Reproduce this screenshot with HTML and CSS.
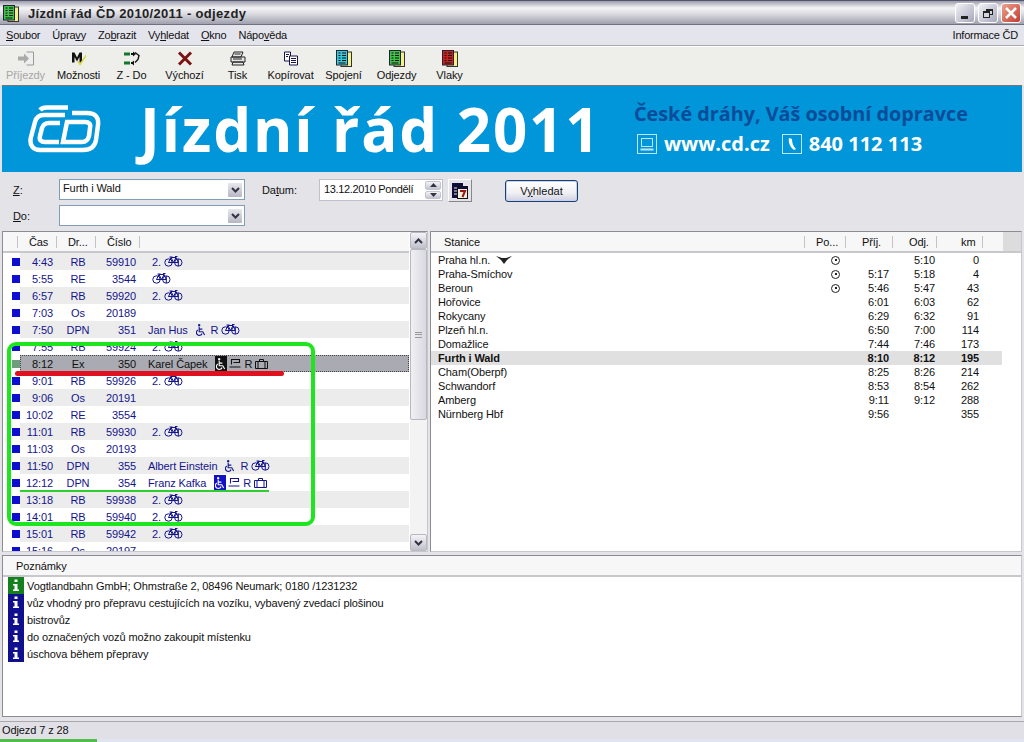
FILE: index.html
```html
<!DOCTYPE html>
<html>

<head>
    <meta charset="UTF-8">
    <title>Jízdní řád ČD 2010/2011 - odjezdy</title>
    <link rel="stylesheet" href="styles.css">
</head>

<body>
    <svg class="defs" width="0" height="0">
        <symbol id="bike" viewBox="0 0 19 11">
            <g fill="none" stroke="currentColor" stroke-width="1">
                <circle cx="4.500" cy="6.500" r="3.700" />
                <circle cx="14.300" cy="6.500" r="3.700" />
                <path d="M4.500 6.500 7 1.500h5l2.300 5h-10M7 1.500l2.500 5 2.500-5M5.500 1h3M11 .5h2.500M14.300 3v7" />
            </g>
        </symbol>
        <symbol id="chair" viewBox="0 0 11 13">
            <g fill="none" stroke="currentColor" stroke-width="1.200">
                <circle cx="3.500" cy="1.200" r=".7" />
                <path d="M3.500 3v5.500h4l2 3.500M3.500 5.500h3.500" />
                <path d="M2 6.500a3.200 3.200 0 1 0 4.700 3.800" />
            </g>
        </symbol>
        <symbol id="cup" viewBox="0 0 12 11">
            <path d="M2.500 6.500V1.500h8v3h-6M.5 9h11" fill="none" stroke="currentColor" stroke-width="1.100" />
        </symbol>
        <symbol id="case" viewBox="0 0 13 10">
            <path d="M.5 2.500h12v7H.5zM4.500 2.500v-2h4v2" fill="none" stroke="currentColor" />
            <path d="M3 3v6M10 3v6" stroke="currentColor" />
        </symbol>
        <symbol id="sheet" viewBox="0 0 16 17">
            <rect x="5" y="2" width="10.500" height="14.500" fill="#f4f08c" stroke="#333" />
            <rect x=".5" y=".5" width="11" height="14.500" fill="currentColor" stroke="#223" />
            <path d="M2.500 3h2M6 3h4M2.500 5.500h2M6 5.500h4M2.500 8h2M6 8h4M2.500 10.500h2M6 10.500h4M2.500 13h7" stroke="#111" />
        </symbol>
        <symbol id="info" viewBox="0 0 16 17">
            <rect width="16" height="17" fill="currentColor" />
            <path d="M6.500 2.500h3v2.500h-3zM5 7h4.500v5.500H11V14H5v-1.500h1.500V8.500H5z" fill="#fff" />
        </symbol>
    </svg>

    <div class="app">
        <header class="titlebar">
            <svg class="title-icon"><use href="#sheet" /></svg>
            <span class="title-text">Jízdní řád ČD 2010/2011 - odjezdy</span>
            <div class="win-buttons">
                <span class="win-btn"><i class="glyph-min"></i></span>
                <span class="win-btn"><i class="glyph-max back"></i><i class="glyph-max"></i></span>
                <span class="win-btn win-close">
                    <svg width="14" height="14" viewBox="0 0 14 14"><path d="M2 2l10 10M12 2 2 12" stroke="#fff" stroke-width="2.500" /></svg>
                </span>
            </div>
        </header>

        <nav class="menubar">
            <span><u>S</u>oubor</span>
            <span>Úpra<u>v</u>y</span>
            <span>Zo<u>b</u>razit</span>
            <span>Vy<u>h</u>ledat</span>
            <span><u>O</u>kno</span>
            <span>Nápo<u>v</u>ěda</span>
            <span class="menu-right">Informace ČD</span>
        </nav>

        <div class="toolbar">
            <div class="tool disabled">
                <svg width="18" height="16" viewBox="0 0 18 16"><path d="M9.500 1.500h7v13h-7" fill="#eee" stroke="#999" /><path d="M1 6h6V3l5 5-5 5v-3H1z" fill="#aaa" /></svg>
                <span>Příjezdy</span>
            </div>
            <div class="tool">
                <svg width="18" height="16" viewBox="0 0 18 16"><path d="M2 12V2h2.500L7 7l2.500-5H12v10H9.500V6.500L7 11 4.500 6.500V12z" fill="#111" /><path d="M8 11l2 3 6-9" fill="none" stroke="#d8d840" stroke-width="1.500" /></svg>
                <span>Možnosti</span>
            </div>
            <div class="tool">
                <svg width="18" height="16" viewBox="0 0 18 16"><path d="M1 2h6v3H1z" fill="#11772b" /><path d="M1 11h6v3H1z" fill="#11772b" /><path d="M8 3.500h2M8 12.500h2" stroke="#111" stroke-width="2" /><path d="M12 2l4 3-1 4-3 3" fill="none" stroke="#111" stroke-width="1.400" /><path d="M10 1v5l3-2.500zM11 10v5l-3-2.500z" fill="#111" /></svg>
                <span>Z - Do</span>
            </div>
            <div class="tool">
                <svg width="18" height="16" viewBox="0 0 18 16"><path d="M3 2l12 12M15 2 3 14" stroke="#7a1414" stroke-width="3" /></svg>
                <span>Výchozí</span>
            </div>
            <div class="tool">
                <svg width="18" height="16" viewBox="0 0 18 16"><path d="M5 1.500h9l-2 5H3zM2 6.500h14v5H2zM4 11.500h10l1 3H3z" fill="#e8e8e8" stroke="#222" /><path d="M4 8.500h9M5.500 3.500h6" stroke="#222" /></svg>
                <span>Tisk</span>
            </div>
            <div class="tool">
                <svg width="18" height="16" viewBox="0 0 18 16"><path d="M2.500 1.500h6v9h-6z" fill="#fff" stroke="#13134a" /><path d="M7.500 5.500h8v9h-8z" fill="#fff" stroke="#13134a" /><path d="M9 8h5M9 10h5M9 12h5M4 4h3M4 6h2" stroke="#13134a" /></svg>
                <span>Kopírovat</span>
            </div>
            <div class="tool">
                <svg width="16" height="17" color="#35c8d8"><use href="#sheet" /></svg>
                <span>Spojení</span>
            </div>
            <div class="tool">
                <svg width="16" height="17" color="#3ec04a"><use href="#sheet" /></svg>
                <span>Odjezdy</span>
            </div>
            <div class="tool">
                <svg width="16" height="17" color="#c92020"><use href="#sheet" /></svg>
                <span>Vlaky</span>
            </div>
        </div>

        <section class="banner">
            <svg class="cd-logo" width="74" height="50" viewBox="0 0 74 50">
                <g fill="none" stroke="#fff" stroke-width="4.500">
                    <path d="M13 6Q15 3.500 20 3.500H41" />
                    <path d="M38 11H17C11 11 9 14 8 18L4 33C2 41 6 46 13 46H56C64 46 68 42 69 36L71 21C72 13 68 9 60 9H45" />
                    <path d="M33 19H22C18 19 16 21 15 24L13 32C12 36 14 38 18 38H32" />
                    <path d="M40 18L36 38H55C59 38 61 36 62 32L63 24C64 20 62 18 58 18Z" />
                </g>
            </svg>
            <h1 class="banner-title">Jízdní řád 2011</h1>
            <div class="banner-info">
                <div class="slogan">České dráhy, Váš osobní dopravce</div>
                <div class="contacts">
                    <svg width="20" height="20" viewBox="0 0 20 20"><g fill="none" stroke="#bfe6f8"><rect x=".5" y=".5" width="19" height="19" /><rect x="4.500" y="4.500" width="11" height="8" /><path d="M3.500 15.500h13" stroke-width="2" /></g></svg>
                    <span class="web">www.cd.cz</span>
                    <svg width="20" height="20" viewBox="0 0 20 20"><rect x=".5" y=".5" width="19" height="19" fill="none" stroke="#bfe6f8" /><path d="M7 4c-1 4 1 9 5 12l2-1c-3-3-4-6-4-10z" fill="#fff" /></svg>
                    <span class="phone">840 112 113</span>
                </div>
            </div>
        </section>

        <form class="search">
            <div class="search-row">
                <label class="field-label"><u>Z</u>:</label>
                <div class="combo"><span>Furth i Wald</span><b class="combo-btn"><svg width="9" height="6" viewBox="0 0 9 6"><path d="M1 1l3.500 3.500L8 1" fill="none" stroke="#334" stroke-width="2" /></svg></b></div>
                <label class="date-label">Da<u>t</u>um:</label>
                <div class="date-box">
                    <span class="date-text">13.12.2010 Pondělí</span>
                    <div class="spin">
                        <b><svg width="7" height="4" viewBox="0 0 7 4"><path d="M0 4l3.500-4L7 4z" fill="#334" /></svg></b>
                        <b><svg width="7" height="4" viewBox="0 0 7 4"><path d="M0 0l3.500 4L7 0z" fill="#334" /></svg></b>
                    </div>
                </div>
                <div class="cal-btn"><svg width="16" height="16" viewBox="0 0 16 16"><path d="M0 0h11v3h-2v12H0z" fill="#0f0f3c" /><path d="M2 5h3M2 8h3M2 11h3" stroke="#e8e8e8" /><rect x="5.500" y="3.500" width="10" height="12" fill="#f0edda" stroke="#111" /><path d="M6 4h9v2H6z" fill="#0f0f3c" /><path d="M8 8h5l-2.500 6" fill="none" stroke="#a01414" stroke-width="2" /></svg></div>
                <button class="search-btn" type="button">V<u>y</u>hledat</button>
            </div>
            <div class="search-row">
                <label class="field-label"><u>D</u>o:</label>
                <div class="combo"><span></span><b class="combo-btn"><svg width="9" height="6" viewBox="0 0 9 6"><path d="M1 1l3.500 3.500L8 1" fill="none" stroke="#334" stroke-width="2" /></svg></b></div>
            </div>
        </form>

        <div class="panels">
            <div class="panel trains">
                <div class="list">
                    <div class="head trains-head">
                        <span class="h-mark"></span><span class="h-time">Čas</span><span class="h-kind">Dr...</span><span class="h-num">Číslo</span>
                    </div>
                    <div class="rows">
                        <div class="row alt"><i class="mark"></i><span class="time">4:43</span><span class="kind">RB</span><span class="num">59910</span><span class="extra">2. <svg class="i-bike"><use href="#bike" /></svg></span></div>
                        <div class="row"><i class="mark"></i><span class="time">5:55</span><span class="kind">RE</span><span class="num">3544</span><span class="extra"><svg class="i-bike"><use href="#bike" /></svg></span></div>
                        <div class="row alt"><i class="mark"></i><span class="time">6:57</span><span class="kind">RB</span><span class="num">59920</span><span class="extra">2. <svg class="i-bike"><use href="#bike" /></svg></span></div>
                        <div class="row"><i class="mark"></i><span class="time">7:03</span><span class="kind">Os</span><span class="num">20189</span><span class="extra"></span></div>
                        <div class="row alt"><i class="mark"></i><span class="time">7:50</span><span class="kind">DPN</span><span class="num">351</span><span class="extra"><em>Jan Hus</em><svg class="i-chair"><use href="#chair" /></svg> R <svg class="i-bike"><use href="#bike" /></svg></span></div>
                        <div class="row"><i class="mark"></i><span class="time">7:55</span><span class="kind">RB</span><span class="num">59924</span><span class="extra">2. <svg class="i-bike"><use href="#bike" /></svg></span></div>
                        <div class="row current"><i class="mark"></i><span class="time">8:12</span><span class="kind">Ex</span><span class="num">350</span><span class="extra"><em>Karel Čapek</em><span class="chair-box"><svg class="i-chair"><use href="#chair" /></svg></span><svg class="i-cup"><use href="#cup" /></svg> R <svg class="i-case"><use href="#case" /></svg></span></div>
                        <div class="row"><i class="mark"></i><span class="time">9:01</span><span class="kind">RB</span><span class="num">59926</span><span class="extra">2. <svg class="i-bike"><use href="#bike" /></svg></span></div>
                        <div class="row alt"><i class="mark"></i><span class="time">9:06</span><span class="kind">Os</span><span class="num">20191</span><span class="extra"></span></div>
                        <div class="row"><i class="mark"></i><span class="time">10:02</span><span class="kind">RE</span><span class="num">3554</span><span class="extra"></span></div>
                        <div class="row alt"><i class="mark"></i><span class="time">11:01</span><span class="kind">RB</span><span class="num">59930</span><span class="extra">2. <svg class="i-bike"><use href="#bike" /></svg></span></div>
                        <div class="row"><i class="mark"></i><span class="time">11:03</span><span class="kind">Os</span><span class="num">20193</span><span class="extra"></span></div>
                        <div class="row alt"><i class="mark"></i><span class="time">11:50</span><span class="kind">DPN</span><span class="num">355</span><span class="extra"><em>Albert Einstein</em><svg class="i-chair"><use href="#chair" /></svg> R <svg class="i-bike"><use href="#bike" /></svg></span></div>
                        <div class="row"><i class="mark"></i><span class="time">12:12</span><span class="kind">DPN</span><span class="num">354</span><span class="extra"><em>Franz Kafka</em><span class="chair-box blue"><svg class="i-chair"><use href="#chair" /></svg></span><svg class="i-cup"><use href="#cup" /></svg> R <svg class="i-case"><use href="#case" /></svg></span></div>
                        <div class="row alt"><i class="mark"></i><span class="time">13:18</span><span class="kind">RB</span><span class="num">59938</span><span class="extra">2. <svg class="i-bike"><use href="#bike" /></svg></span></div>
                        <div class="row"><i class="mark"></i><span class="time">14:01</span><span class="kind">RB</span><span class="num">59940</span><span class="extra">2. <svg class="i-bike"><use href="#bike" /></svg></span></div>
                        <div class="row alt"><i class="mark"></i><span class="time">15:01</span><span class="kind">RB</span><span class="num">59942</span><span class="extra">2. <svg class="i-bike"><use href="#bike" /></svg></span></div>
                        <div class="row"><i class="mark"></i><span class="time">15:16</span><span class="kind">Os</span><span class="num">20197</span><span class="extra"></span></div>
                    </div>
                </div>
                <div class="scrollbar">
                    <b class="sb-btn"><svg width="9" height="6" viewBox="0 0 9 6"><path d="M1 5l3.500-3.500L8 5" fill="none" stroke="#334" stroke-width="2" /></svg></b>
                    <div class="sb-thumb"><i></i></div>
                    <div class="sb-track"></div>
                    <b class="sb-btn"><svg width="9" height="6" viewBox="0 0 9 6"><path d="M1 1l3.500 3.500L8 1" fill="none" stroke="#334" stroke-width="2" /></svg></b>
                </div>
            </div>

            <div class="panel stops">
                <div class="head stops-head">
                    <span class="h-station">Stanice</span><span class="h-po">Po...</span><span class="h-arr">Příj.</span><span class="h-dep">Odj.</span><span class="h-km">km</span><span class="h-end"></span>
                </div>
                <div class="stop"><span class="st">Praha hl.n. <svg class="train-sign" width="16" height="8" viewBox="0 0 16 8"><path d="M0 0l6 2h4l6-2-5 4-3 4-3-4z" fill="#222" /></svg></span><span class="po"><i class="clock"></i></span><span class="t"></span><span class="t">5:10</span><span class="km">0</span></div>
                <div class="stop"><span class="st">Praha-Smíchov</span><span class="po"><i class="clock"></i></span><span class="t">5:17</span><span class="t">5:18</span><span class="km">4</span></div>
                <div class="stop"><span class="st">Beroun</span><span class="po"><i class="clock"></i></span><span class="t">5:46</span><span class="t">5:47</span><span class="km">43</span></div>
                <div class="stop"><span class="st">Hořovice</span><span class="po"></span><span class="t">6:01</span><span class="t">6:03</span><span class="km">62</span></div>
                <div class="stop"><span class="st">Rokycany</span><span class="po"></span><span class="t">6:29</span><span class="t">6:32</span><span class="km">91</span></div>
                <div class="stop"><span class="st">Plzeň hl.n.</span><span class="po"></span><span class="t">6:50</span><span class="t">7:00</span><span class="km">114</span></div>
                <div class="stop"><span class="st">Domažlice</span><span class="po"></span><span class="t">7:44</span><span class="t">7:46</span><span class="km">173</span></div>
                <div class="stop here"><span class="st">Furth i Wald</span><span class="po"></span><span class="t">8:10</span><span class="t">8:12</span><span class="km">195</span></div>
                <div class="stop"><span class="st">Cham(Oberpf)</span><span class="po"></span><span class="t">8:25</span><span class="t">8:26</span><span class="km">214</span></div>
                <div class="stop"><span class="st">Schwandorf</span><span class="po"></span><span class="t">8:53</span><span class="t">8:54</span><span class="km">262</span></div>
                <div class="stop"><span class="st">Amberg</span><span class="po"></span><span class="t">9:11</span><span class="t">9:12</span><span class="km">288</span></div>
                <div class="stop"><span class="st">Nürnberg Hbf</span><span class="po"></span><span class="t">9:56</span><span class="t"></span><span class="km">355</span></div>
            </div>
        </div>

        <section class="notes">
            <div class="head notes-head"><span>Poznámky</span></div>
            <div class="note"><svg class="i-info green"><use href="#info" /></svg>Vogtlandbahn GmbH; Ohmstraße 2, 08496 Neumark; 0180 /1231232</div>
            <div class="note"><svg class="i-info"><use href="#info" /></svg>vůz vhodný pro přepravu cestujících na vozíku, vybavený zvedací plošinou</div>
            <div class="note"><svg class="i-info"><use href="#info" /></svg>bistrovůz</div>
            <div class="note"><svg class="i-info"><use href="#info" /></svg>do označených vozů možno zakoupit místenku</div>
            <div class="note"><svg class="i-info"><use href="#info" /></svg>úschova během přepravy</div>
        </section>

        <footer class="statusbar">Odjezd 7 z 28</footer>
        <div class="taskbar"><i></i></div>

        <!-- marks drawn over the screenshot -->
        <div class="ring"></div>
        <div class="red-line"></div>
        <div class="green-line"></div>
    </div>
</body>

</html>
```

FILE: styles.css
```css
* {
    box-sizing: border-box;
}

html,
body {
    margin: 0;
    height: 742px;
    overflow: hidden;
}

body {
    font-family: "Liberation Sans", Arial, sans-serif;
    font-size: 11px;
    letter-spacing: -.1px;
    color: #111;
    background: #e3e3e8;
}

.defs {
    position: absolute;
}

.app {
    position: relative;
    width: 1024px;
    height: 742px;
    overflow: hidden;
}

/* title bar */
.titlebar {
    height: 25px;
    display: flex;
    align-items: center;
    padding: 1px 3px 0 3px;
    border-top: 1px solid #55556e;
    border-bottom: 1px solid #70707e;
    background: linear-gradient(#9c9cab, #f4f4f6 30%, #dcdce2 55%, #a0a0ae);
}

.title-icon {
    width: 16px;
    height: 17px;
    color: #3ec04a;
}

.title-text {
    margin-left: 9px;
    font-size: 13px;
    font-weight: bold;
    letter-spacing: .33px;
    color: #222;
}

.win-buttons {
    margin-left: auto;
    display: flex;
    gap: 3px;
}

.win-btn {
    position: relative;
    width: 20px;
    height: 20px;
    display: flex;
    align-items: center;
    justify-content: center;
    border: 1px solid #fff;
    border-radius: 3px;
    background: linear-gradient(135deg, #f2f2f6, #a6a6bc);
}

.win-close {
    background: linear-gradient(135deg, #eba28f, #c43c30);
}

.glyph-min {
    position: absolute;
    left: 5px;
    bottom: 3px;
    width: 7px;
    height: 3px;
    background: #222;
}

.glyph-max {
    position: absolute;
    left: 4px;
    bottom: 4px;
    width: 7px;
    height: 7px;
    border: 1px solid #222;
    border-top-width: 2px;
    background: #d4d4de;
}

.glyph-max.back {
    left: 7px;
    bottom: 7px;
    height: 6px;
}

/* menu */
.menubar {
    height: 20px;
    display: flex;
    align-items: center;
    padding: 0 6px;
    gap: 12px;
    letter-spacing: -.2px;
    background: #e4e4ec;
}

.menu-right {
    margin-left: auto;
}

/* toolbar */
.toolbar {
    height: 40px;
    display: flex;
    padding-top: 4px;
    border-top: 1px solid #a9a9ad;
    background: #eeeeea;
    box-shadow: inset 0 1px 0 #fff;
}

.tool {
    width: 53px;
    flex: none;
    display: flex;
    flex-direction: column;
    align-items: center;
    gap: 2px;
}

.tool svg {
    height: 17px;
}

.tool:first-child {
    margin-left: -1px;
}

.tool.disabled {
    color: #a6a6a6;
}

/* banner */
.banner {
    height: 87px;
    margin: 0 2px;
    display: flex;
    align-items: center;
    padding-left: 25px;
    border-top: 1px solid #777;
    background: #0096d9;
    color: #fff;
    letter-spacing: 0;
}

.cd-logo {
    flex: none;
}

.banner-title {
    margin: 0 0 0 39px;
    width: 494px;
    font-family: "Open Sans", Lato, sans-serif;
    font-size: 60px;
    font-weight: 700;
    line-height: 70px;
    letter-spacing: 1.900px;
    white-space: nowrap;
}

.banner-info {
    font-family: "Open Sans", sans-serif;
    font-weight: 700;
}

.slogan {
    font-size: 19.800px;
    line-height: 26px;
    color: #0b4c98;
    white-space: nowrap;
}

.contacts {
    display: flex;
    align-items: center;
    margin-top: 4px;
    padding-left: 3px;
    font-size: 20px;
    line-height: 26px;
}

.web {
    margin: 0 12px 0 7px;
}

.phone {
    margin-left: 7px;
}

/* search form */
.search {
    height: 59px;
    padding: 7px 0 0 13px;
    background: #e3e3e8;
}

.search-row {
    height: 26px;
    display: flex;
    align-items: flex-start;
}

.field-label {
    width: 46px;
    padding-top: 5px;
}

.combo {
    width: 186px;
    height: 21px;
    display: flex;
    justify-content: space-between;
    padding: 2px 1px 1px 3px;
    border: 1px solid #7f9db9;
    background: #fff;
}

.combo-btn {
    width: 16px;
    display: flex;
    align-items: center;
    justify-content: center;
    border: 1px solid #fff;
    border-radius: 2px;
    background: linear-gradient(#e8e8ee, #b6b6c4);
}

.date-label {
    width: 57px;
    margin-left: 17px;
    padding-top: 5px;
}

.date-box {
    width: 124px;
    height: 22px;
    display: flex;
    justify-content: space-between;
    padding: 1px 1px 1px 4px;
    line-height: 16px;
    border: 1px solid #c0c0cc;
    background: #fff;
}

.date-text {
    letter-spacing: -.35px;
}

.spin {
    width: 16px;
    display: flex;
    flex-direction: column;
    gap: 1px;
}

.spin b {
    flex: 1;
    display: flex;
    align-items: center;
    justify-content: center;
    border: 1px solid #c4c4d0;
    border-radius: 2px;
    background: linear-gradient(#f4f4f8, #c4c4d0);
}

.cal-btn {
    width: 24px;
    height: 23px;
    margin-left: 5px;
    display: flex;
    align-items: center;
    justify-content: center;
    border: 1px solid;
    border-color: #fff #888 #888 #fff;
    background: #e3e3e8;
}

.search-btn {
    width: 73px;
    height: 22px;
    margin: 1px 0 0 33px;
    padding: 0;
    font: inherit;
    color: #111;
    border: 1px solid #1c3f73;
    border-radius: 3px;
    background: linear-gradient(#fff, #f0f0f4 60%, #cfcfe2);
    box-shadow: inset 0 0 0 1px #c6d4ea;
}

/* panels */
.panels {
    height: 321px;
    display: flex;
    gap: 2px;
    padding: 0 2px;
}

.panel {
    border: 1px solid #8c8c94;
    border-color: #8c8c94 #c8c8cc #c8c8cc #8c8c94;
    background: #fff;
    overflow: hidden;
}

.trains {
    width: 426px;
    display: flex;
}

.stops {
    width: 592px;
}

.head {
    height: 21px;
    display: flex;
    align-items: center;
    padding-top: 1px;
    border-bottom: 2px solid #c8c8cc;
    background: #f7f7f7;
}

.head span {
    height: 12px;
    line-height: 12px;
    border-right: 1px solid #c4c4c8;
}

.list {
    width: 407px;
    overflow: hidden;
}

.h-mark {
    width: 15px;
}

.h-time {
    width: 39px;
    padding-left: 11px;
}

.h-kind {
    width: 39px;
    padding-left: 11px;
}

.h-num {
    width: 44px;
    padding-left: 11px;
}

.rows {
    height: 298px;
    overflow: hidden;
}

.row {
    position: relative;
    height: 17px;
    display: flex;
    align-items: center;
    padding-left: 9px;
    color: #14148c;
    z-index: 0;
}

.row.alt::before,
.row.current::before {
    content: "";
    position: absolute;
    left: 17px;
    right: 0;
    top: 0;
    bottom: 0;
    z-index: -1;
    background: #ececec;
}

.row.current {
    color: #111;
}

.row.current::before {
    background: #a9aab2;
    border: 1px dotted #444;
}

.mark {
    width: 8px;
    height: 8px;
    flex: none;
    background: #0e0ed0;
}

.current .mark {
    background: #6f9e7e;
}

.time {
    width: 33px;
    text-align: right;
}

.kind {
    width: 50px;
    text-align: center;
}

.num {
    width: 33px;
    text-align: right;
    margin-right: 12px;
}

.extra {
    display: flex;
    align-items: center;
    padding-left: 4px;
    white-space: pre;
}

.extra em {
    margin-left: -4px;
    margin-right: 8px;
    font-style: normal;
}

.i-bike {
    width: 19px;
    height: 11px;
}

.i-chair {
    width: 10px;
    height: 12px;
    margin-right: 2px;
}

.i-cup {
    width: 12px;
    height: 11px;
    margin-left: 2px;
}

.i-case {
    width: 13px;
    height: 10px;
}

.chair-box {
    width: 12px;
    height: 16px;
    padding-left: 1px;
    display: flex;
    align-items: center;
    color: #fff;
    background: #111;
}

.chair-box.blue {
    background: #1212c4;
}

.chair-box .i-chair {
    margin: 0;
}

.scrollbar {
    width: 17px;
    margin-left: 1px;
    display: flex;
    flex-direction: column;
    background: #f3f3f3;
}

.sb-btn {
    height: 17px;
    flex: none;
    display: flex;
    align-items: center;
    justify-content: center;
    border: 1px solid #b8b8c0;
    border-radius: 2px;
    background: linear-gradient(#f4f4f8, #c0c0cc);
}

.sb-thumb {
    height: 171px;
    flex: none;
    display: flex;
    align-items: center;
    justify-content: center;
    border: 1px solid #b8b8c0;
    border-radius: 2px;
    background: linear-gradient(90deg, #f0f0f4, #d8d8e0);
}

.sb-thumb i {
    width: 7px;
    height: 6px;
    border-top: 1px solid #999;
    border-bottom: 1px solid #999;
    background: linear-gradient(#999, #999) center / 100% 1px no-repeat;
}

.sb-track {
    flex: 1;
}

/* stops */
.h-station {
    width: 374px;
    padding-left: 13px;
}

.h-po {
    width: 41px;
    padding-left: 11px;
}

.h-arr {
    width: 47px;
    padding-left: 16px;
}

.h-dep {
    width: 44px;
    padding-left: 16px;
}

.h-km {
    width: 46px;
    padding-left: 24px;
}

.h-end {
    border-right: 0 !important;
    margin-left: auto;
}

.stops-head {
    background: linear-gradient(90deg, #f7f7f7 97%, #dcdcdc 97%);
}

.stop {
    width: 571px;
    height: 14px;
    display: grid;
    grid-template-columns: 384px 27px 40px 46px 44px;
    align-items: center;
    line-height: 14px;
    padding-left: 7px;
    white-space: nowrap;
}

.stop .t,
.stop .km {
    text-align: right;
}

.stop.here {
    font-weight: bold;
    background: #e0e0e0;
}

.train-sign {
    margin-left: 3px;
}

.po {
    display: flex;
    justify-content: center;
}

.clock {
    position: relative;
    width: 9px;
    height: 9px;
    border: 1px solid #222;
    border-radius: 50%;
}

.clock::after {
    content: "";
    position: absolute;
    left: 2.500px;
    top: 2.500px;
    width: 2px;
    height: 2px;
    background: #222;
}

/* notes */
.notes {
    height: 162px;
    margin: 3px 2px 0;
    border: 1px solid #8c8c94;
    border-right-color: #c8c8cc;
    background: #fff;
}

.notes-head {
    padding-left: 13px;
}

.notes-head span {
    border: 0;
}

.note {
    height: 17px;
    display: flex;
    align-items: center;
    padding-left: 5px;
    gap: 3px;
}

.i-info {
    width: 16px;
    height: 17px;
    color: #10108e;
}

.i-info.green {
    color: #14801e;
}

/* status */
.statusbar {
    height: 18px;
    margin-top: 4px;
    padding: 2px 0 0 2px;
    border-top: 1px solid #a9a9ad;
    background: #e0e0e6;
}

.taskbar {
    height: 4px;
    background: #dfe4f0;
}

.taskbar i {
    display: block;
    width: 97px;
    height: 4px;
    background: #4fbf4a;
}

/* drawn marks */
.ring {
    position: absolute;
    left: 7px;
    top: 342px;
    width: 308px;
    height: 184px;
    border: 4px solid #1ee61e;
    border-radius: 9px;
}

.red-line {
    position: absolute;
    left: 15px;
    top: 371px;
    width: 269px;
    height: 5px;
    border-radius: 3px;
    background: #e0101f;
}

.green-line {
    position: absolute;
    left: 20px;
    top: 490px;
    width: 249px;
    height: 2px;
    background: #2ecf2e;
}
```
